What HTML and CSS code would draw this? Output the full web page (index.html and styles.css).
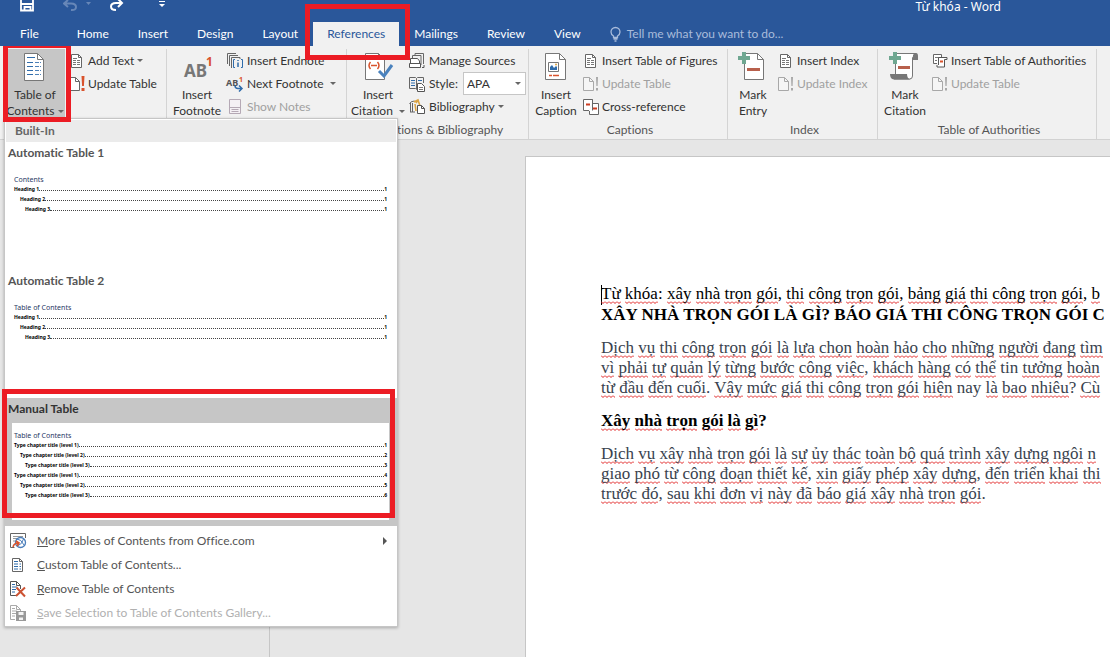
FILE: index.html
```html
<!DOCTYPE html>
<html lang="vi">
<head>
<meta charset="utf-8">
<title>Từ khóa - Word</title>
<link rel="stylesheet" href="styles.css">
</head>
<body>
<svg class="defs" aria-hidden="true">
  <symbol id="page" viewBox="0 0 16 16"><path d="M2.500 1.500h7l3 3v10h-10z" fill="#fff" stroke="#666"/><path d="M9.500 1.500v3h3" fill="none" stroke="#666"/></symbol>
  <symbol id="page-lines" viewBox="0 0 16 16"><use href="#page"/><path d="M4 5.500h4M4 7.500h3M8 7.500h3M4 9.500h3M8 9.500h3M4 11.500h3M8 11.500h3" stroke="#777"/></symbol>
  <symbol id="page-alert" viewBox="0 0 16 16"><path d="M.5 1.500h6l4 4v9h-10z" fill="#f5f5f5" stroke="#a8a8a8"/><path d="M6.500 1.500v4h4" fill="none" stroke="#a8a8a8"/><path d="M13 1h2l-.4 9h-1.200zM13 12h2v2.500h-2z" fill="#a8a8a8"/></symbol>
  <symbol id="plus" viewBox="0 0 12 12"><path d="M4 0h4v4h4v4H8v4H4V8H0V4h4z" fill="#6fa791"/></symbol>
</svg>

<header class="top">
  <div class="titlebar">
    <div class="quick">
      <button class="q q-save" aria-label="Save"><svg width="16" height="13" viewBox="0 0 16 13"><path d="M1 0v10.500h12V0M1 4h12M4.500 10V7h6v3" fill="none" stroke="#fff" stroke-width="1.800"/></svg></button>
      <button class="q q-undo" aria-label="Undo"><svg width="28" height="13" viewBox="0 0 28 13"><path d="M1 3.500h7q5 0 5 3.500t-5 3M5 0L1 3.500 5 7" fill="none" stroke="#6787b8" stroke-width="2"/><path d="M23 2h5l-2.500 3z" fill="#6787b8"/></svg></button>
      <button class="q q-redo" aria-label="Redo"><svg width="16" height="13" viewBox="0 0 16 13"><path d="M13 3H7Q2 3 2 6.500T7 10M9-1l4 4-4 4" fill="none" stroke="#fff" stroke-width="2"/></svg></button>
      <button class="q" aria-label="Customize"><svg width="6" height="13" viewBox="0 0 6 13"><path d="M0 1.500h6" stroke="#fff"/><path d="M0 4h6L3 7z" fill="#fff"/></svg></button>
    </div>
    <div class="title">Từ khóa - Word</div>
  </div>
  <nav class="tabs">
    <button class="tab file">File</button>
    <button class="tab">Home</button>
    <button class="tab">Insert</button>
    <button class="tab">Design</button>
    <button class="tab">Layout</button>
    <button class="tab active">References</button>
    <button class="tab">Mailings</button>
    <button class="tab">Review</button>
    <button class="tab">View</button>
    <button class="tell"><svg width="11" height="15" viewBox="0 0 11 15"><path d="M3.500 10.500V9Q1 7.500 1 5a4.500 4.500 0 0 1 9 0Q10 7.500 7.500 9v1.500zM3.500 12h4M4.500 14h2" fill="none" stroke="#a9bcdb" stroke-width="1.300"/></svg>Tell me what you want to do...</button>
  </nav>
</header>

<section class="ribbon">
  <div class="group g-toc">
    <div class="body">
      <button class="big pressed">
        <svg width="24" height="30" viewBox="0 0 24 30"><path d="M1.500 1.500h13l6 6v21h-19z" fill="#fff" stroke="#777"/><path d="M14.500 1.500v6h6" fill="none" stroke="#777"/><path d="M4 5.500h8M4 10.500h6M4 14.500h6M4 18.500h6M4 22.500h6" stroke="#2f6cab"/><path d="M12 10.500h6M12 14.500h6M12 18.500h6M12 22.500h6" stroke="#4f82b8" stroke-dasharray="4 1"/></svg>
        <span>Table of<br>Contents <i class="caret"></i></span>
      </button>
      <div class="col">
        <button class="row"><svg width="16" height="16"><use href="#page-lines"/></svg>Add Text <i class="caret"></i></button>
        <button class="row"><svg width="16" height="16" viewBox="0 0 16 16"><path d="M.5 1.500h6l4 4v9h-10z" fill="#fff" stroke="#666"/><path d="M6.500 1.500v4h4" fill="none" stroke="#666"/><path d="M12.500 0h3l-.6 10h-1.800zM12.500 12h3v3h-3z" fill="#d9532c"/></svg>Update Table</button>
      </div>
    </div>
    <div class="menu" role="menu">
      <div class="menu-head">Built-In</div>
      <button class="item">
        <b class="item-name">Automatic Table 1</b>
        <span class="preview">
          <span class="p-title">Contents</span>
          <span class="p-line"><span>Heading 1</span><i></i><span>1</span></span>
          <span class="p-line l2"><span>Heading 2</span><i></i><span>1</span></span>
          <span class="p-line l3"><span>Heading 3</span><i></i><span>1</span></span>
        </span>
      </button>
      <button class="item">
        <b class="item-name">Automatic Table 2</b>
        <span class="preview">
          <span class="p-title">Table of Contents</span>
          <span class="p-line"><span>Heading 1</span><i></i><span>1</span></span>
          <span class="p-line l2"><span>Heading 2</span><i></i><span>1</span></span>
          <span class="p-line l3"><span>Heading 3</span><i></i><span>1</span></span>
        </span>
      </button>
      <button class="item selected">
        <b class="item-name">Manual Table</b>
        <span class="preview">
          <span class="p-title">Table of Contents</span>
          <span class="p-line"><span>Type chapter title (level 1)</span><i></i><span>1</span></span>
          <span class="p-line l2"><span>Type chapter title (level 2)</span><i></i><span>2</span></span>
          <span class="p-line l3"><span>Type chapter title (level 3)</span><i></i><span>3</span></span>
          <span class="p-line"><span>Type chapter title (level 1)</span><i></i><span>4</span></span>
          <span class="p-line l2"><span>Type chapter title (level 2)</span><i></i><span>5</span></span>
          <span class="p-line l3"><span>Type chapter title (level 3)</span><i></i><span>6</span></span>
        </span>
      </button>
      <div class="commands">
        <button class="cmd"><svg width="16" height="16" viewBox="0 0 16 16"><path d="M.5 14.500V.5h15V5M.5 14.500h4" fill="none" stroke="#666"/><path d="M3 3.500h10M3 5.500h4M3 8h2" stroke="#999"/><circle cx="10.500" cy="9.500" r="5" fill="#fff" stroke="#4a7ebb" stroke-width="1.300"/><path d="M7 6q4 0 7 6M13.500 6q-1 5-6 7" fill="none" stroke="#4a7ebb"/><path d="M3 14q1-4 5-4M6 8l3 2-2 3" fill="none" stroke="#d9532c" stroke-width="1.600"/></svg><span><u>M</u>ore Tables of Contents from Office.com</span><i class="more"></i></button>
        <button class="cmd"><svg width="16" height="16" viewBox="0 0 16 16"><path d="M2.500 1.500h7l3 3v10h-10z" fill="#fff" stroke="#666"/><path d="M9.500 1.500v3h3" fill="none" stroke="#666"/><path d="M4 4.500h4M4 7h4M9.500 7H11M4 9.500h4M9.500 9.500H11M4 12h4M9.500 12H11" stroke="#2f6cab"/></svg><span><u>C</u>ustom Table of Contents...</span></button>
        <button class="cmd"><svg width="16" height="16" viewBox="0 0 16 16"><path d="M6 14.500H.5V.5h6l4 4V8" fill="#fff" stroke="#555"/><path d="M6.500.5v4h4" fill="none" stroke="#555"/><path d="M2 3.500h3M2 6h5M2 8.500h4M2 11h3" stroke="#2f6cab"/><path d="M6.500 6.500l8.500 9M15 6.500l-9 8.500" stroke="#cc5233" stroke-width="2"/></svg><span><u>R</u>emove Table of Contents</span></button>
        <button class="cmd" disabled><svg width="16" height="16" viewBox="0 0 16 16"><path d="M5 14.500H.5V.5h6l4 4V6" fill="#fff" stroke="#aaa"/><path d="M6.500.5v4h4M2 3.500h3M2 6h5M2 8.500h4M2 11h3" fill="none" stroke="#aaa"/><path d="M6 6h10v10H6z" fill="#999"/><path d="M8.500 7h5v3h-5zM9 12.500h4V15H9z" fill="#f2f2f2"/></svg><span><u>S</u>ave Selection to Table of Contents Gallery...</span></button>
      </div>
    </div>
  </div>

  <div class="group g-foot">
    <div class="body">
      <button class="big">
        <svg width="32" height="30" viewBox="0 0 32 30"><text x="3" y="25" class="ab">AB</text><text x="25" y="14" class="one">1</text></svg>
        <span>Insert<br>Footnote</span>
      </button>
      <div class="col">
        <button class="row"><svg width="17" height="16" viewBox="0 0 17 16"><path d="M.5 11V.5H9M2.500 13V2.500H11M4.500 15V4.500H13V6" fill="none" stroke="#666"/><path d="M8 6.500H6.500v8H8M14 6.500h1.500v8H14" fill="none" stroke="#2f6cab"/><path d="M11 7v1M11 9.500V14" stroke="#2f6cab" stroke-width="1.500"/></svg>Insert Endnote</button>
        <button class="row"><svg width="17" height="16" viewBox="0 0 17 16"><text x="-1" y="10" class="ab-s">AB</text><text x="12" y="6" class="one-s">1</text><path d="M8 9.500q0 3 3 3h4M12 9.500l3 3-3 3" fill="none" stroke="#2f6cab" stroke-width="1.500"/></svg>Next Footnote <i class="caret wide"></i></button>
        <button class="row" disabled><svg width="17" height="16" viewBox="0 0 17 16"><path d="M2.500.5h11v14h-11zM2.500 8.500h11M4.500 10.500h7M4.500 12.500h7" fill="#f4f0f4" stroke="#b5a9b5"/></svg>Show Notes</button>
      </div>
    </div>
  </div>

  <div class="group g-cite">
    <div class="body">
      <button class="big">
        <svg width="30" height="30" viewBox="0 0 30 30"><path d="M2.500 1.500h13l6 6v20h-19z" fill="#fff" stroke="#777"/><path d="M15.500 1.500v6h6" fill="none" stroke="#777"/><path d="M7.500 10q-3 3.500 0 7M14.500 10q3 3.500 0 7M8 13.500h6" fill="none" stroke="#d9532c" stroke-width="1.500"/><path d="M16 19l5 5 8-11" fill="none" stroke="#4a82bd" stroke-width="3"/></svg>
        <span>Insert<br>Citation <i class="caret wide"></i></span>
      </button>
      <div class="col">
        <button class="row"><svg width="17" height="16" viewBox="0 0 17 16"><path d="M6 3V.5h8.500V11M3.500 5V2.500h8.500V12" fill="none" stroke="#666"/><path d="M1.500 10V5.500h7L10.500 8v3M.5 10.500h11v4H.5z" fill="#fff" stroke="#555"/><path d="M13 14.500h2V12" fill="none" stroke="#555"/></svg>Manage Sources</button>
        <div class="row"><svg width="17" height="16" viewBox="0 0 17 16"><path d="M.5 1.500h6l1 1 1-1h6V7M.5 1.500v11h6l1 1V2.500" fill="none" stroke="#666"/><path d="M2 4.500h4M2 7h4M2 9.500h4M9 4.500h4" stroke="#2f6cab"/><path d="M8.500 7.500h4l3 3v5h-7z" fill="#fff" stroke="#555"/><path d="M10 11.500h4M10 13.500h4" stroke="#777"/></svg><label for="style">Style:</label>
          <span class="combo"><select id="style"><option>APA</option></select><i class="caret"></i></span></div>
        <button class="row"><svg width="17" height="16" viewBox="0 0 17 16"><path d="M1.500 4v9M3.500 4v9M.5 5q1-3 5-3M1 13h5" fill="none" stroke="#666"/><path d="M5 3l4-2 2 6M6 5l1 7M9 1l-2 3" fill="none" stroke="#dca544" stroke-width="1.600"/><path d="M8.500 6.500h4l3 3v5h-7z" fill="#fff" stroke="#555"/><path d="M12.500 6.500v3h3" fill="none" stroke="#555"/></svg>Bibliography <i class="caret"></i></button>
      </div>
    </div>
    <div class="label">Citations &amp; Bibliography</div>
  </div>

  <div class="group g-cap">
    <div class="body">
      <button class="big">
        <svg width="24" height="30" viewBox="0 0 24 30"><path d="M1.500 1.500h14l6 6v20h-20z" fill="#fff" stroke="#777"/><path d="M15.500 1.500v6h6" fill="none" stroke="#777"/><path d="M4.500 10.500h10v9h-10z" fill="#fff" stroke="#777"/><path d="M6 18v-3l2-2 2 3 2-2 1 1v3z" fill="#2f6cab"/><circle cx="12" cy="12.500" r="1" fill="#dca544"/><path d="M5 23.500h3M9 23.500h6" stroke="#d9532c" stroke-width="1.500"/></svg>
        <span>Insert<br>Caption</span>
      </button>
      <div class="col">
        <button class="row"><svg width="16" height="16"><use href="#page-lines"/></svg>Insert Table of Figures</button>
        <button class="row" disabled><svg width="16" height="16"><use href="#page-alert"/></svg>Update Table</button>
        <button class="row"><svg width="16" height="16" viewBox="0 0 16 16"><path d="M6 11.500H.5V.5h9V3M9.500 4.500h6v11h-9V12" fill="#fff" stroke="#666"/><path d="M9.500.5v11" stroke="#666"/><path d="M3 5.500h4M10 9.500h4" stroke="#cc3d22" stroke-width="2"/></svg>Cross-reference</button>
      </div>
    </div>
    <div class="label">Captions</div>
  </div>

  <div class="group g-index">
    <div class="body">
      <button class="big">
        <svg width="28" height="30" viewBox="0 0 28 30"><path d="M5.500 1.500h13l6 6v20h-19z" fill="#fff" stroke="#777"/><path d="M18.500 1.500v6h6" fill="none" stroke="#777"/><path d="M8 17.500h13" stroke="#b8604c" stroke-width="3"/><use href="#plus" x="-1" y="0" width="12" height="12"/></svg>
        <span>Mark<br>Entry</span>
      </button>
      <div class="col">
        <button class="row"><svg width="16" height="16"><use href="#page-lines"/></svg>Insert Index</button>
        <button class="row" disabled><svg width="16" height="16"><use href="#page-alert"/></svg>Update Index</button>
      </div>
    </div>
    <div class="label">Index</div>
  </div>

  <div class="group g-auth">
    <div class="body">
      <button class="big">
        <svg width="30" height="30" viewBox="0 0 30 30"><path d="M5.500 22V1.500H26l-3.500 4V24q0 3-3 3H4z" fill="#fff" stroke="#777"/><path d="M23 8V3q1-2 3-2t2 3v4zM0 22h17q0 5 4 5.500H4Q0 27 0 22z" fill="#777"/><path d="M8 15.500h12" stroke="#b8604c" stroke-width="3"/><use href="#plus" x="-1" y="0" width="12" height="12"/></svg>
        <span>Mark<br>Citation</span>
      </button>
      <div class="col">
        <button class="row"><svg width="16" height="16" viewBox="0 0 16 16"><path d="M5 10.500H1.500V1.500h8V4" fill="#fff" stroke="#666"/><path d="M3 4.500h5M3 7.500h2" stroke="#777"/><path d="M6.500 12V4.500H15v2h-2.500V14H5v-2" fill="#fff" stroke="#555"/><path d="M8 8.500h3" stroke="#d9532c" stroke-width="2"/></svg>Insert Table of Authorities</button>
        <button class="row" disabled><svg width="16" height="16"><use href="#page-alert"/></svg>Update Table</button>
      </div>
    </div>
    <div class="label">Table of Authorities</div>
  </div>
</section>

<main class="workspace">
  <aside class="nav-pane"></aside>
  <article class="page">
    <p class="first"><span class="cursor"></span><s>Từ</s> <s>khóa</s>: <s>xây</s> <s>nhà</s> <s>trọn</s> <s>gói</s>, <s>thi</s> <s>công</s> <s>trọn</s> <s>gói</s>, <s>bảng</s> <s>giá</s> <s>thi</s> <s>công</s> <s>trọn</s> <s>gói</s>, <s>b</s><br><b>XÂY NHÀ TRỌN GÓI LÀ GÌ? BÁO GIÁ THI CÔNG TRỌN GÓI C</b></p>
    <p><s>Dịch</s> <s>vụ</s> <s>thi</s> <s>công</s> <s>trọn</s> <s>gói</s> <s>là</s> <s>lựa</s> <s>chọn</s> <s>hoàn</s> <s>hảo</s> <s>cho</s> <s>những</s> <s>người</s> <s>đang</s> <s>tìm</s><br><s>vì</s> <s>phải</s> <s>tự</s> <s>quản</s> <s>lý</s> <s>từng</s> <s>bước</s> <s>công</s> <s>việc</s>, <s>khách</s> <s>hàng</s> <s>có</s> <s>thể</s> tin <s>tưởng</s> <s>hoàn</s><br><s>từ</s> <s>đầu</s> <s>đến</s> <s>cuối</s>. <s>Vậy</s> <s>mức</s> <s>giá</s> <s>thi</s> <s>công</s> <s>trọn</s> <s>gói</s> <s>hiện</s> nay <s>là</s> <s>bao</s> <s>nhiêu</s>? <s>Cù</s></p>
    <h2><s>Xây</s> <s>nhà</s> <s>trọn</s> <s>gói</s> <s>là</s> <s>gì</s>?</h2>
    <p><s>Dịch</s> <s>vụ</s> <s>xây</s> <s>nhà</s> <s>trọn</s> <s>gói</s> <s>là</s> <s>sự</s> <s>ủy</s> <s>thác</s> <s>toàn</s> <s>bộ</s> <s>quá</s> <s>trình</s> <s>xây</s> <s>dựng</s> <s>ngôi</s> <s>n</s><br><s>giao</s> <s>phó</s> <s>từ</s> <s>công</s> <s>đoạn</s> <s>thiết</s> <s>kế</s>, <s>xin</s> <s>giấy</s> <s>phép</s> <s>xây</s> <s>dựng</s>, <s>đến</s> <s>triển</s> <s>khai</s> <s>thi</s><br><s>trước</s> <s>đó</s>, <s>sau</s> <s>khi</s> <s>đơn</s> <s>vị</s> <s>này</s> <s>đã</s> <s>báo</s> <s>giá</s> <s>xây</s> <s>nhà</s> <s>trọn</s> <s>gói</s>.</p>
  </article>
</main>
</body>
</html>
```
FILE: styles.css
```css
* { box-sizing: border-box; }
html, body { height: 100%; margin: 0; }
body {
  display: flex;
  flex-direction: column;
  overflow: hidden;
  background: #e6e6e6;
  color: #333;
  font: 12px/16px Lato, "Noto Sans", sans-serif;
  font-variant-ligatures: none;
}
button, select {
  margin: 0;
  padding: 0;
  border: 0;
  background: none;
  color: inherit;
  font: inherit;
  font-variant-ligatures: none;
  white-space: nowrap;
}
.defs { position: absolute; width: 0; height: 0; }
svg { flex: none; overflow: visible; }

/* title bar and tabs */
.top { position: relative; z-index: 3; background: #2a579a; color: #fff; }
.titlebar { display: flex; height: 22px; justify-content: space-between; align-items: flex-start; }
.quick { display: flex; padding-left: 20px; }
.q { display: flex; overflow: hidden; }
.q-save { margin-right: 27px; }
.q-undo { margin-right: 18px; }
.q-redo { margin-right: 34px; }
.title { padding-right: 109px; font-family: "Noto Sans", sans-serif; line-height: 13px; }
.tabs { display: flex; gap: 1px; height: 24px; }
.tab { padding: 0 14px; }
.file { padding: 0 23px 0 20px; }
.active { position: relative; background: #f1f1f1; color: #2a579a; }
.tell { display: flex; align-items: center; gap: 6px; padding-left: 14px; color: #a9bcdb; }

/* red highlight frames */
.active::after, .pressed::after, .selected::after {
  content: "";
  position: absolute;
  border: 5px solid #ec1c24;
  pointer-events: none;
}
.active::after { inset: -18px -11px -14px -8px; }
.pressed::after { inset: -6px -6px -3px -2px; z-index: 6; }
.selected::after { inset: -9px 2px 8px -3px; }

/* ribbon */
.ribbon {
  position: relative;
  z-index: 2;
  display: flex;
  padding-top: 3px;
  border-bottom: 1px solid #d2d2d2;
  background: #f1f1f1;
}
.group { display: flex; flex-direction: column; height: 90px; border-right: 1px solid #d4d4d4; }
.g-toc { position: relative; width: 167px; padding-left: 5px; }
.g-foot { width: 180px; padding-left: 4px; }
.g-cite { width: 182px; padding-left: 4px; }
.g-cap { width: 199px; padding-left: 4px; }
.g-index { width: 150px; padding-left: 4px; }
.g-auth { width: 219px; padding-left: 4px; }
.body { display: flex; height: 70px; }
.big { display: flex; flex-direction: column; align-items: center; padding-top: 3px; gap: 5px; line-height: 16px; }
.pressed { position: relative; width: 60px; background: #c6c6c6; }
.g-foot .big { width: 52px; }
.g-cite .big { width: 54px; }
.g-cap .big { width: 46px; }
.g-index .big { width: 42px; }
.g-auth .big { width: 46px; }
.col { display: flex; flex-direction: column; }
.row { display: flex; align-items: center; gap: 3px; height: 23px; padding-left: 4px; white-space: nowrap; }
.row:disabled { color: #a0a0a0; }
.label { line-height: 22px; text-align: center; color: #555; }
.caret {
  display: inline-block;
  border: 3px solid transparent;
  border-top-color: #666;
  border-bottom-width: 0;
  vertical-align: middle;
}
.wide { margin-left: 3px; }
.combo { display: flex; align-items: center; width: 63px; height: 23px; margin-left: 2px; padding-right: 4px; border: 1px solid #c6c6c6; background: #fff; }
.combo select { flex: 1; appearance: none; padding-left: 3px; outline: 0; }
.ab { font: bold 17px "Noto Sans", sans-serif; fill: #777; }
.one { font: bold 12px "Noto Sans", sans-serif; fill: #d9532c; }
.ab-s { font: bold 9px "Noto Sans", sans-serif; fill: #555; }
.one-s { font: bold 7px "Noto Sans", sans-serif; fill: #d9532c; }

/* drop-down gallery */
.menu {
  position: absolute;
  top: 69px;
  left: 4px;
  z-index: 5;
  width: 394px;
  padding: 1px 0;
  border: 1px solid #c6c6c6;
  background: #fff;
  box-shadow: 0 1px 3px #0004;
}
.menu-head { margin: 0 1px; padding: 0 9px; background: #ebebeb; color: #666; font-weight: bold; line-height: 22px; }
.item { display: flex; flex-direction: column; align-items: stretch; position: relative; width: 100%; height: 128px; padding: 3px 8px 6px 3px; text-align: left; color: #555; }
.preview { display: flex; flex-direction: column; flex: 1; margin-top: 6px; margin-left: 4px; padding: 9px 2px 0; color: #000; font-family: "Noto Sans", sans-serif; }
.p-title { font-size: 7px; line-height: 8px; color: #1f3864; }
.p-line { display: flex; align-items: baseline; font-size: 5px; font-weight: bold; line-height: 10px; }
.p-line i { flex: 1; border-bottom: 1px dotted #444; }
.l2 { padding-left: 6px; }
.l3 { padding-left: 11px; }
.selected { background: #c6c6c6; color: #333; }
.selected .preview { background: #fff; }
.commands { display: flex; flex-direction: column; padding-top: 3px; }
.cmd { display: flex; align-items: center; gap: 11px; height: 24px; padding: 0 10px 0 5px; color: #555; }
.cmd:disabled { color: #b0b0b0; }
.more { margin-left: auto; border: 4px solid transparent; border-left-color: #555; border-right-width: 0; }

/* document */
.workspace { display: flex; flex: 1; min-height: 0; overflow: hidden; }
.nav-pane { flex: 0 0 270px; border-right: 1px solid #c6c6c6; }
.page {
  flex: 1;
  min-width: 0;
  margin: 16px 0 0 255px;
  padding: 127px 0 0 75px;
  overflow: hidden;
  border: 1px solid #c6c6c6;
  border-width: 1px 0 0 1px;
  background: #fff;
  color: #39424e;
  font: 17px/20px "Liberation Serif", serif;
  white-space: nowrap;
}
.page p, .page h2 { margin: 0 0 13px; font-size: 17px; }
.page .first, .page h2 { color: #000; }
/* spelling marks: a fine zigzag under each word */
.page s {
  padding-bottom: 1px;
  text-decoration: none;
  background: url("data:image/svg+xml,%3Csvg xmlns='http://www.w3.org/2000/svg' width='4' height='3'%3E%3Cpath d='M0 .5L2 2.500L4 .5' fill='none' stroke='%23e02020'/%3E%3C/svg%3E") left bottom repeat-x;
}
.cursor { display: inline-block; width: 1px; height: 20px; margin-right: -1px; background: #000; vertical-align: middle; }
```
